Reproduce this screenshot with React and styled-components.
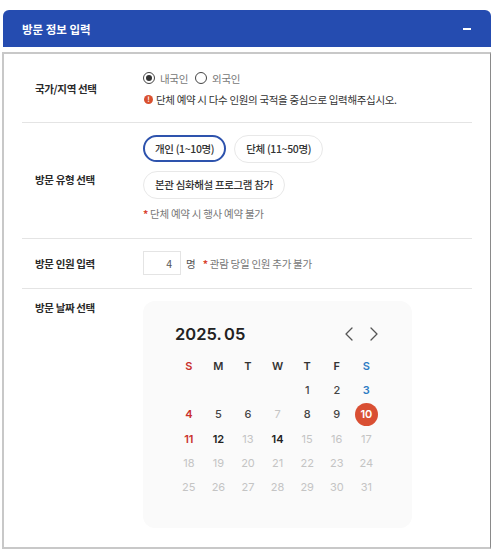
import React from 'react';
import styled, { createGlobalStyle } from 'styled-components';
import { ChevronLeft, ChevronRight } from 'lucide-react';

const GlobalStyle = createGlobalStyle`
    html, body {
        margin: 0;
        background: #fff;
    }
    body {
        font-family: "Noto Sans CJK KR", "Noto Sans", sans-serif;
    }
`;

const Page = styled.div`
    width: 500px;
    height: 550px;
    padding: 10px 9px 0 3px;
    box-sizing: border-box;
    overflow: hidden;
`;

const Header = styled.div`
    height: 37px;
    background: #254cb0;
    border-radius: 6px 6px 0 0;
    display: flex;
    align-items: center;
    justify-content: space-between;
    padding: 0 20px 0 19px;
    color: #fff;
    font-size: 11.5px;
    font-weight: 700;
    box-sizing: border-box;
`;

const Minus = styled.span`
    width: 8px;
    height: 2px;
    background: #fff;
`;

const Panel = styled.div`
    margin: 5px 0 0 -1px;
    height: 497px;
    box-sizing: border-box;
    border: 2px solid #c8c8c8;
    border-right: 1px solid #8a8a8a;
    padding: 0 18px;
`;

const Row = styled.div`
    display: flex;
    align-items: ${props => props.align || 'center'};
    height: ${props => props.height}px;
    border-bottom: ${props => (props.last ? 'none' : '1px solid #e4e4e4')};
    box-sizing: border-box;
`;

const Label = styled.div`
    width: 121px;
    padding-left: 13px;
    box-sizing: border-box;
    font-size: 10.5px;
    font-weight: 700;
    color: #2a2a2a;
    letter-spacing: -0.35px;
    flex-shrink: 0;
    margin-top: ${props => props.top || 0}px;
`;

const Field = styled.div`
    display: flex;
    flex-direction: column;
    align-items: flex-start;
    margin-top: ${props => props.top || 0}px;
`;

const RadioRow = styled.div`
    display: flex;
    align-items: center;
    height: 16px;
    margin-bottom: 5.5px;
`;

const Radio = styled.span`
    width: 12px;
    height: 12px;
    border: 1px solid #444;
    border-radius: 50%;
    box-sizing: border-box;
    margin-right: 5px;
    display: flex;
    align-items: center;
    justify-content: center;
    &::after {
        content: "";
        width: 6px;
        height: 6px;
        border-radius: 50%;
        background: ${props => (props.checked ? '#333' : 'transparent')};
    }
`;

const RadioLabel = styled.span`
    font-size: 10.5px;
    color: #777;
    letter-spacing: -0.3px;
    margin-right: 7px;
`;

const Notice = styled.div`
    display: flex;
    align-items: center;
    gap: 3px;
    font-size: 10.5px;
    line-height: 15px;
    color: #333;
    letter-spacing: -0.33px;
`;

const AlertDot = styled.span`
    width: 9px;
    height: 9px;
    margin-left: 1px;
    border-radius: 50%;
    background: #d9502f;
    color: #fff;
    font-size: 7px;
    font-weight: 700;
    line-height: 9px;
    text-align: center;
`;

const PillRow = styled.div`
    display: flex;
    gap: 8px;
    margin-bottom: 8px;
`;

const Pill = styled.div`
    height: ${props => (props.active ? 27 : 28)}px;
    padding: 0 ${props => (props.active ? 10 : 11)}px;
    display: flex;
    align-items: center;
    box-sizing: border-box;
    border-radius: 14px;
    border: ${props => (props.active ? '2px solid #2e53ad' : '1px solid #e8e8e8')};
    font-size: 10.5px;
    font-weight: 500;
    color: #333;
    letter-spacing: -0.35px;
    background: #fff;
`;

const Hint = styled.div`
    font-size: 10.5px;
    line-height: 15px;
    color: #777;
    margin-top: ${props => props.top || 0}px;
    letter-spacing: -0.28px;
`;

const Star = styled.span`
    color: #d9412f;
    font-weight: 700;
`;

const CountRow = styled.div`
    display: flex;
    align-items: center;
    margin-top: -1px;
`;

const CountBox = styled.div`
    width: 38px;
    height: 24px;
    border: 1px solid #e4e4e4;
    box-sizing: border-box;
    display: flex;
    align-items: center;
    justify-content: flex-end;
    padding-right: 8px;
    font-size: 10.5px;
    color: #555;
    margin-right: 5px;
`;

const Unit = styled.span`
    font-size: 10.5px;
    color: #555;
    margin-right: 7px;
`;

const Calendar = styled.div`
    width: 269px;
    height: 227px;
    margin-top: 12px;
    background: #fafafa;
    border-radius: 12px;
    padding: 23px 26px 0 32px;
    box-sizing: border-box;
    font-family: Inter, "Liberation Sans", sans-serif;
`;

const CalendarHead = styled.div`
    display: flex;
    align-items: center;
    justify-content: space-between;
    height: 20px;
    margin-bottom: 10px;
`;

const Month = styled.div`
    font-size: 16.5px;
    font-weight: 600;
    color: #222;
    word-spacing: -1.5px;
`;

const Arrows = styled.div`
    display: flex;
    gap: 1px;
    color: #555;
`;

const Grid = styled.div`
    display: grid;
    grid-template-columns: repeat(7, 29.6px);
    grid-auto-rows: 24.2px;
    margin-left: -1px;
`;

const dayColors = {
    sun: '#c9302c',
    sat: '#2f7cc4',
    on: '#444',
    strong: '#222',
    off: '#c4c4c4',
    head: '#333',
};

const dayWeights = {
    off: 400,
    on: 500,
};

const Cell = styled.div`
    display: flex;
    align-items: center;
    justify-content: center;
    font-size: 11px;
    font-weight: ${props => dayWeights[props.kind] || 600};
    color: ${props => dayColors[props.kind] || '#333'};
`;

const Today = styled.span`
    width: 23px;
    height: 23px;
    border-radius: 50%;
    background: #d94f33;
    color: #fff;
    display: flex;
    align-items: center;
    justify-content: center;
    font-weight: 600;
`;

const heads = [
    ['S', 'sun'], ['M', 'head'], ['T', 'head'], ['W', 'head'], ['T', 'head'], ['F', 'head'], ['S', 'sat'],
];

const days = [
    ['', ''], ['', ''], ['', ''], ['', ''], ['1', 'on'], ['2', 'on'], ['3', 'sat'],
    ['4', 'sun'], ['5', 'on'], ['6', 'on'], ['7', 'off'], ['8', 'on'], ['9', 'on'], ['10', 'today'],
    ['11', 'sun'], ['12', 'strong'], ['13', 'off'], ['14', 'strong'], ['15', 'off'], ['16', 'off'], ['17', 'off'],
    ['18', 'off'], ['19', 'off'], ['20', 'off'], ['21', 'off'], ['22', 'off'], ['23', 'off'], ['24', 'off'],
    ['25', 'off'], ['26', 'off'], ['27', 'off'], ['28', 'off'], ['29', 'off'], ['30', 'off'], ['31', 'off'],
];

const App = () => (
    <Page>
        <GlobalStyle />
        <Header>
            <span>방문 정보 입력</span>
            <Minus />
        </Header>
        <Panel>
            <Row height={69}>
                <Label>국가/지역 선택</Label>
                <Field top={1}>
                    <RadioRow>
                        <Radio checked />
                        <RadioLabel>내국인</RadioLabel>
                        <Radio />
                        <RadioLabel>외국인</RadioLabel>
                    </RadioRow>
                    <Notice>
                        <AlertDot>!</AlertDot>
                        단체 예약 시 다수 인원의 국적을 중심으로 입력해주십시오.
                    </Notice>
                </Field>
            </Row>
            <Row height={116}>
                <Label top={-2}>방문 유형 선택</Label>
                <Field top={-6}>
                    <PillRow>
                        <Pill active>개인 (1~10명)</Pill>
                        <Pill>단체 (11~50명)</Pill>
                    </PillRow>
                    <Pill>본관 심화해설 프로그램 참가</Pill>
                    <Hint top={7}><Star>*</Star> 단체 예약 시 행사 예약 불가</Hint>
                </Field>
            </Row>
            <Row height={50}>
                <Label>방문 인원 입력</Label>
                <CountRow>
                    <CountBox>4</CountBox>
                    <Unit>명</Unit>
                    <Hint><Star>*</Star> 관람 당일 인원 추가 불가</Hint>
                </CountRow>
            </Row>
            <Row height={250} align="flex-start" last>
                <Label top={11}>방문 날짜 선택</Label>
                <Calendar>
                    <CalendarHead>
                        <Month>2025. 05</Month>
                        <Arrows>
                            <ChevronLeft size={24} strokeWidth={1.3} />
                            <ChevronRight size={24} strokeWidth={1.3} />
                        </Arrows>
                    </CalendarHead>
                    <Grid>
                        {heads.map(([text, kind], i) => (
                            <Cell key={i} kind={kind}>{text}</Cell>
                        ))}
                        {days.map(([text, kind], i) => (
                            <Cell key={i} kind={kind}>
                                {kind === 'today' ? <Today>{text}</Today> : text}
                            </Cell>
                        ))}
                    </Grid>
                </Calendar>
            </Row>
        </Panel>
    </Page>
);

export default App;
